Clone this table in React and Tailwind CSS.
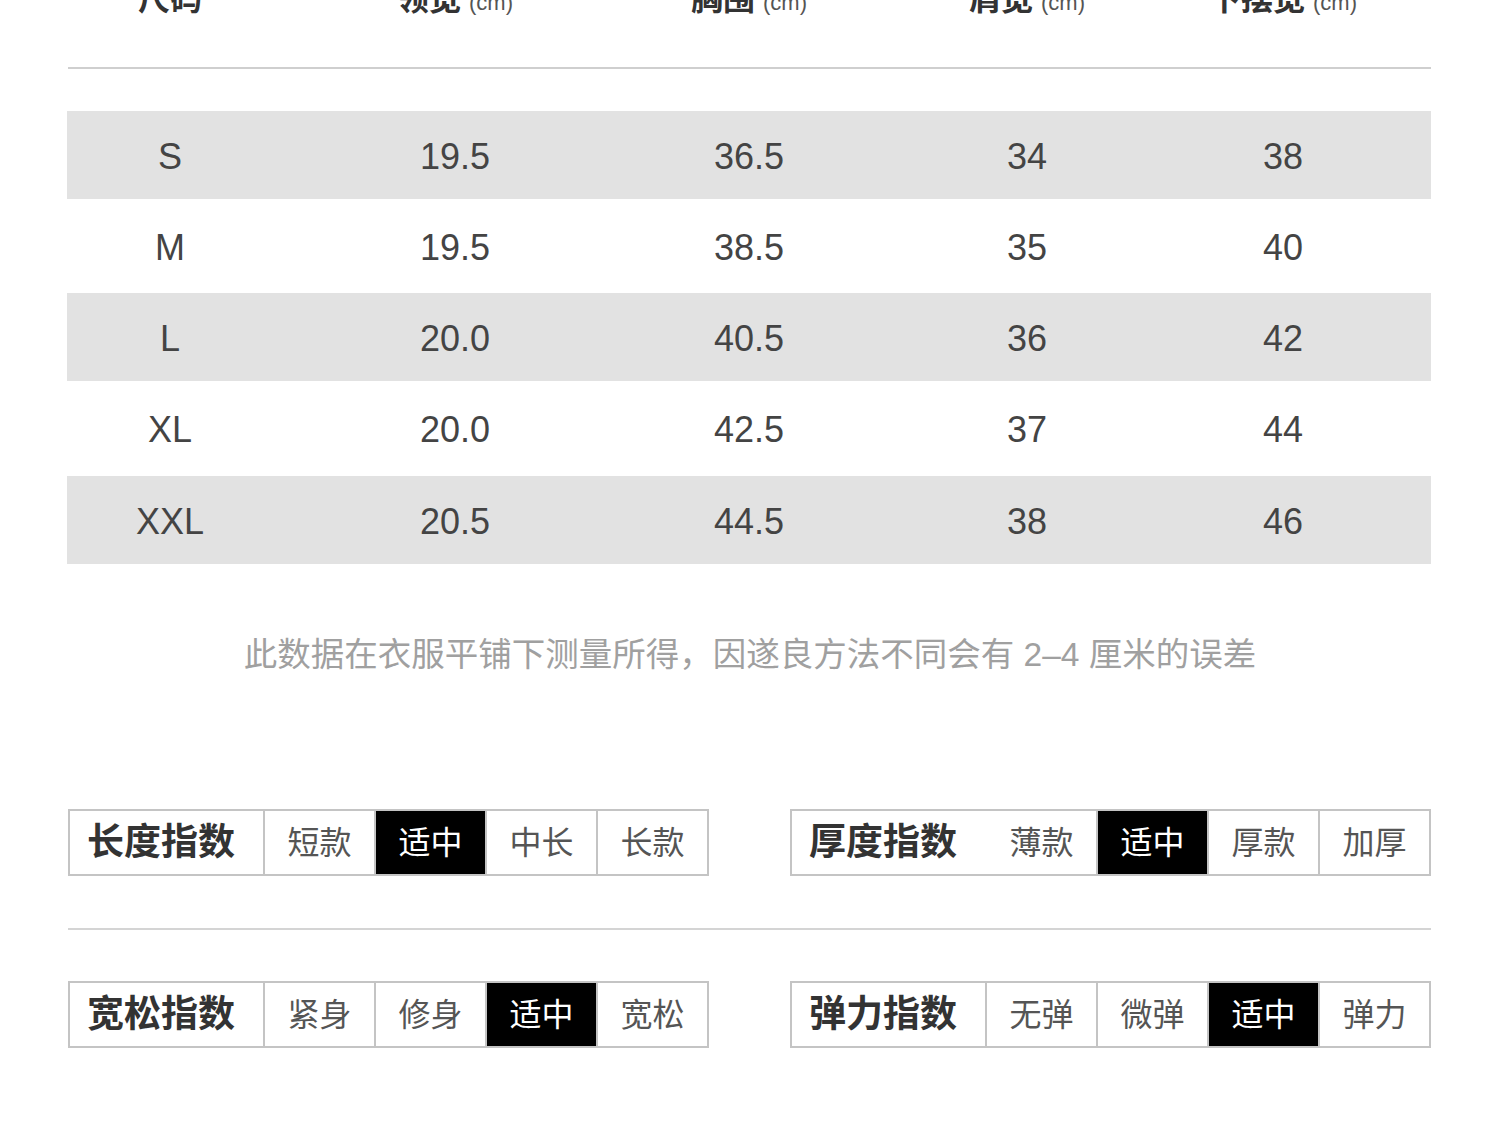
const font = { fontFamily: '"Liberation Sans", "Noto Sans CJK SC", sans-serif' }

const cols = 'grid grid-cols-[206px_364px_224px_332px_180px]'

const headers = [
  { name: '尺码' },
  { name: '领宽', unit: '(cm)' },
  { name: '胸围', unit: '(cm)' },
  { name: '肩宽', unit: '(cm)' },
  { name: '下摆宽', unit: '(cm)' },
]

const rows = [
  ['S', '19.5', '36.5', '34', '38'],
  ['M', '19.5', '38.5', '35', '40'],
  ['L', '20.0', '40.5', '36', '42'],
  ['XL', '20.0', '42.5', '37', '44'],
  ['XXL', '20.5', '44.5', '38', '46'],
]

const rowStyle = [
  'h-[88px] bg-[#e2e2e2]',
  'h-[94px] bg-white',
  'h-[88px] bg-[#e2e2e2]',
  'h-[95px] bg-white',
  'h-[88px] bg-[#e2e2e2]',
]

function IndexBox({ label, options, active, noFirstDivider }) {
  return (
    <div className="flex h-[67px] w-[641px] border-2 border-[#c4c4c4] bg-white">
      <div className="flex w-[193px] items-center pl-[17px] text-[37px] font-bold text-[#333]">{label}</div>
      {options.map((o, i) => (
        <div
          key={o}
          className={
            'flex flex-1 items-center justify-center text-[32px] ' +
            (i === 0 && noFirstDivider ? 'border-l-2 border-transparent ' : 'border-l-2 border-[#c4c4c4] ') +
            (i === active ? 'bg-black text-white' : 'text-[#555]')
          }
        >
          {o}
        </div>
      ))}
    </div>
  )
}

export default function App() {
  return (
    <div className="h-[1137px] w-[1500px] overflow-hidden bg-white" style={font}>
      <div className={cols + ' -mt-[35px] ml-[67px] h-[68px] items-center text-[#333]'}>
        {headers.map((h) => (
          <div key={h.name} className="flex items-baseline justify-center gap-2">
            <span className="text-[32px] font-bold">{h.name}</span>
            {h.unit && <span className="text-[22px] text-[#555]">{h.unit}</span>}
          </div>
        ))}
      </div>
      <div className="ml-[68px] mt-[34px] h-[2px] w-[1363px] bg-[#cfcfcf]" />
      <div className="ml-[67px] mt-[42px] w-[1364px]">
        {rows.map((r, i) => (
          <div key={r[0]} className={cols + ' items-center pt-[3px] ' + rowStyle[i]}>
            {r.map((v, j) => (
              <div key={j} className="text-center text-[36px] text-[#444]">{v}</div>
            ))}
          </div>
        ))}
      </div>
      <div className="mt-[71px] h-[40px] text-center text-[33.5px] leading-[40px] text-[#a0a0a0]">
        此数据在衣服平铺下测量所得，因遂良方法不同会有 2–4 厘米的误差
      </div>
      <div className="ml-[68px] mt-[134px] flex w-[1363px] justify-between">
        <IndexBox label="长度指数" options={['短款', '适中', '中长', '长款']} active={1} />
        <IndexBox label="厚度指数" options={['薄款', '适中', '厚款', '加厚']} active={1} noFirstDivider />
      </div>
      <div className="ml-[68px] mt-[52px] h-[2px] w-[1363px] bg-[#d4d4d4]" />
      <div className="ml-[68px] mt-[51px] flex w-[1363px] justify-between">
        <IndexBox label="宽松指数" options={['紧身', '修身', '适中', '宽松']} active={2} />
        <IndexBox label="弹力指数" options={['无弹', '微弹', '适中', '弹力']} active={2} />
      </div>
    </div>
  )
}
